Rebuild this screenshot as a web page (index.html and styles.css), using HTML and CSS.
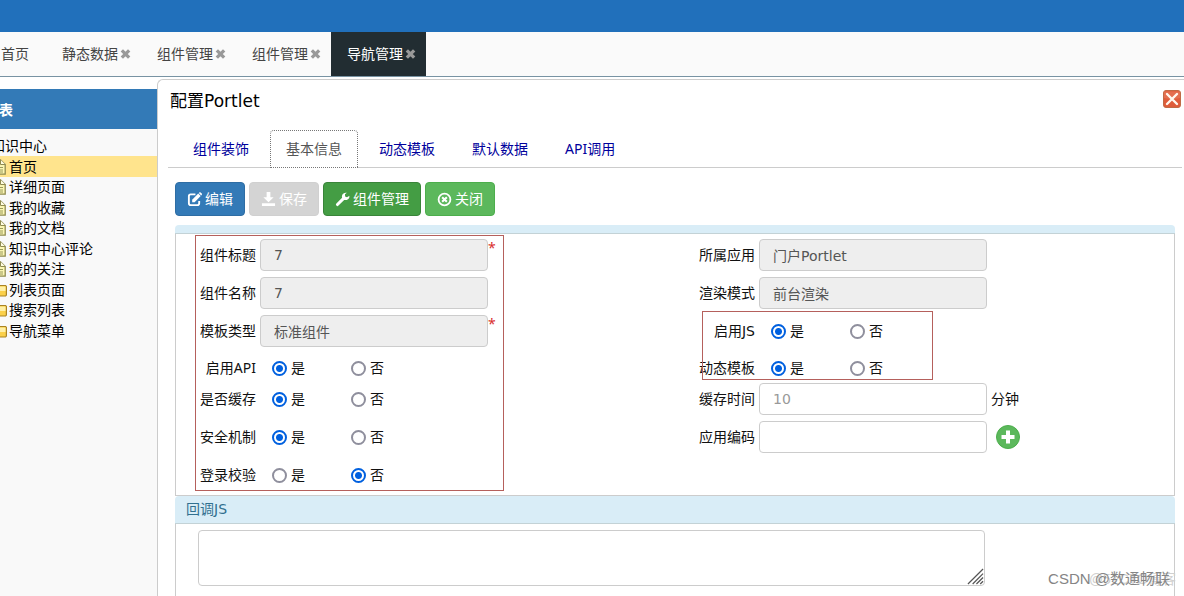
FILE: index.html
```html
<!DOCTYPE html>
<html lang="zh-CN">
<head>
<meta charset="utf-8">
<title>导航管理</title>
<link rel="stylesheet" href="styles.css">
</head>
<body>
<svg class="defs" aria-hidden="true">
  <symbol id="cross" viewBox="0 0 12 12"><path d="M2 2 10 10M10 2 2 10" stroke="currentColor" stroke-width="3.6" fill="none"/></symbol>
  <symbol id="page" viewBox="0 0 16 16"><path d="M2.5 .8H9.500L14.200 5.500V15.200H2.500Z" fill="#fbf6b4" stroke="#8f8a50" stroke-width="1.300"/><path d="M9.500 .8V5.500H14.200" fill="#fffde0" stroke="#8f8a50"/><path d="M5 6H8M5 8.500H12M5 11H12M5 13H12" stroke="#9a9a5c" fill="none"/></symbol>
  <symbol id="folder" viewBox="0 0 16 16"><path d="M.6 14V2H6L7.500 3.500H14.600L15.400 4.500V13L14.600 14Z" fill="#fbd049" stroke="#a98324" stroke-width="1.200"/><path d="M1.500 4.600H14.500V9H1.500Z" fill="#fff0a8"/></symbol>
</svg>
<div class="app">
  <header class="topbar"></header>
  <nav class="page-tabs">
    <div class="page-tab home"><a href="#">首页</a></div>
    <div class="page-tab"><a href="#">静态数据</a><button type="button" aria-label="关闭静态数据"><svg><use href="#cross"/></svg></button></div>
    <div class="page-tab"><a href="#">组件管理</a><button type="button" aria-label="关闭组件管理"><svg><use href="#cross"/></svg></button></div>
    <div class="page-tab"><a href="#">组件管理</a><button type="button" aria-label="关闭组件管理"><svg><use href="#cross"/></svg></button></div>
    <div class="page-tab active"><a href="#">导航管理</a><button type="button" aria-label="关闭导航管理"><svg><use href="#cross"/></svg></button></div>
  </nav>
  <div class="workspace">
    <aside class="sidebar">
      <h2>表</h2>
      <ul class="tree">
        <li class="root"><a href="#">知识中心</a></li>
        <li class="selected"><svg><use href="#page"/></svg><a href="#">首页</a></li>
        <li><svg><use href="#page"/></svg><a href="#">详细页面</a></li>
        <li><svg><use href="#page"/></svg><a href="#">我的收藏</a></li>
        <li><svg><use href="#page"/></svg><a href="#">我的文档</a></li>
        <li><svg><use href="#page"/></svg><a href="#">知识中心评论</a></li>
        <li><svg><use href="#page"/></svg><a href="#">我的关注</a></li>
        <li><svg><use href="#folder"/></svg><a href="#">列表页面</a></li>
        <li><svg><use href="#folder"/></svg><a href="#">搜索列表</a></li>
        <li><svg><use href="#folder"/></svg><a href="#">导航菜单</a></li>
      </ul>
    </aside>
    <main class="dialog">
      <div class="dialog-head">
        <h1>配置Portlet</h1>
        <button type="button" class="dialog-close" aria-label="关闭"><svg viewBox="0 0 18 18"><rect x=".5" y=".5" width="17" height="17" rx="2.500" fill="#df5c3a" stroke="#c06a45"/><path d="M1 1.500H17V8Q9 10 1 8Z" fill="#e87f60" opacity=".55"/><path d="M4 4 14 14M14 4 4 14" stroke="#fff8ee" stroke-width="2.400" stroke-linecap="round"/></svg></button>
      </div>
      <nav class="config-tabs">
        <a href="#">组件装饰</a>
        <a href="#" class="active">基本信息</a>
        <a href="#">动态模板</a>
        <a href="#">默认数据</a>
        <a href="#">API调用</a>
      </nav>
      <div class="toolbar">
        <button type="button" class="btn primary"><svg viewBox="0 0 16 16"><path d="M9 2.500H4Q2 2.500 2 4.500V12Q2 14 4 14H11Q13 14 13 12V9.500" fill="none" stroke="currentColor" stroke-width="2"/><path d="M5.500 8.200 12 1.700 14.600 4.300 8.100 10.800H5.500Z" fill="currentColor"/><path d="M12.600 1.100 13.400.3Q14 0 14.600.5L15.700 1.600Q16.200 2.200 15.800 2.900L15.100 3.700Z" fill="currentColor"/></svg>编辑</button>
        <button type="button" class="btn muted" disabled><svg viewBox="0 0 16 16"><path d="M6 0H10V5.500H13.500L8 11 2.500 5.500H6Z" fill="currentColor"/><path d="M1 12H15V15H1Z" fill="currentColor"/></svg>保存</button>
        <button type="button" class="btn manage"><svg viewBox="0 0 16 16"><path d="M2.600 13.400 9.200 6.800" stroke="currentColor" stroke-width="3.200" stroke-linecap="round"/><path d="M12.600.8Q9.500.2 7.900 2.600 6.900 4.400 7.600 6.400L9.700 8.500Q12 9 13.900 7.700 15.700 6.300 15.400 3.900L12.800 5.500 10.800 4.900 10.600 2.500Z" fill="currentColor"/></svg>组件管理</button>
        <button type="button" class="btn success"><svg viewBox="0 0 16 16"><circle cx="8" cy="8" r="6.300" fill="none" stroke="currentColor" stroke-width="1.900"/><path d="M5.500 5.500 10.500 10.500M10.500 5.500 5.500 10.500" stroke="currentColor" stroke-width="2.200"/></svg>关闭</button>
      </div>
      <form class="form">
        <section class="panel">
          <div class="panel-head slim"></div>
          <div class="panel-body fields">
            <div class="column">
              <div class="row"><label for="title">组件标题</label><input class="text" id="title" value="7" readonly><span class="star">*</span></div>
              <div class="row"><label for="name">组件名称</label><input class="text" id="name" value="7" readonly></div>
              <div class="row"><label for="type">模板类型</label><input class="text" id="type" value="标准组件" readonly><span class="star">*</span></div>
              <div class="row tight" role="radiogroup" aria-labelledby="l-api"><span class="caption" id="l-api">启用API</span><label class="option"><input type="radio" name="api" checked>是</label><label class="option"><input type="radio" name="api">否</label></div>
              <div class="row" role="radiogroup" aria-labelledby="l-cache"><span class="caption" id="l-cache">是否缓存</span><label class="option"><input type="radio" name="cache" checked>是</label><label class="option"><input type="radio" name="cache">否</label></div>
              <div class="row" role="radiogroup" aria-labelledby="l-safe"><span class="caption" id="l-safe">安全机制</span><label class="option"><input type="radio" name="safe" checked>是</label><label class="option"><input type="radio" name="safe">否</label></div>
              <div class="row" role="radiogroup" aria-labelledby="l-login"><span class="caption" id="l-login">登录校验</span><label class="option"><input type="radio" name="login">是</label><label class="option"><input type="radio" name="login" checked>否</label></div>
              <div class="mark mark-basic"></div>
            </div>
            <div class="column">
              <div class="row"><label for="app">所属应用</label><input class="text" id="app" value="门户Portlet" readonly></div>
              <div class="row"><label for="mode">渲染模式</label><input class="text" id="mode" value="前台渲染" readonly></div>
              <div class="row" role="radiogroup" aria-labelledby="l-js"><span class="caption wide" id="l-js">启用JS</span><label class="option"><input type="radio" name="js" checked>是</label><label class="option"><input type="radio" name="js">否</label></div>
              <div class="row tight" role="radiogroup" aria-labelledby="l-tpl"><span class="caption" id="l-tpl">动态模板</span><label class="option"><input type="radio" name="tpl" checked>是</label><label class="option"><input type="radio" name="tpl">否</label></div>
              <div class="row"><label for="ttl">缓存时间</label><input class="text" id="ttl" placeholder="10"><span class="unit">分钟</span></div>
              <div class="row"><label for="code">应用编码</label><input class="text" id="code"><button type="button" class="add" aria-label="添加"><svg viewBox="0 0 24 24"><circle cx="12" cy="12" r="11.500" fill="#5cb85c" stroke="#4cae4c"/><path d="M12 5.500V18.500M5.500 12H18.500" stroke="#fff" stroke-width="4"/></svg></button></div>
              <div class="mark mark-script"></div>
            </div>
          </div>
        </section>
        <section class="panel">
          <label class="panel-head" for="callback">回调JS</label>
          <div class="panel-body script-body">
            <div class="script-box">
              <textarea id="callback"></textarea>
              <svg class="grip" viewBox="0 0 18 18"><path d="M1 17 17 1M6 17 17 6M10 17 17 10M14 17 17 14" stroke="#555" stroke-width="1.300"/></svg>
            </div>
          </div>
        </section>
      </form>
    </main>
  </div>
  <div class="watermark back">@51CTO博客</div>
  <div class="watermark">CSDN @数通畅联</div>
</div>
</body>
</html>
```

FILE: styles.css
```css
* { box-sizing: border-box; }
body {
  margin: 0;
  font: 14px/20px "Noto Sans", "Noto Sans CJK SC", sans-serif;
  color: #111;
  background: #fff;
}
button, input, textarea { font: inherit; color: inherit; }
button { padding: 0; border: 0; background: none; }
a { color: inherit; text-decoration: none; }
.defs { display: none; }
.app {
  position: relative;
  display: flex;
  flex-direction: column;
  height: 100vh;
  overflow: hidden;
}
.topbar { flex: none; height: 32px; background: #2170bb; }

.page-tabs {
  flex: none;
  display: flex;
  height: 45px;
  background: #fafafa;
  border-bottom: 1px solid #7893a3;
  color: #444;
}
.page-tab {
  display: flex;
  align-items: center;
  gap: 2px;
  padding: 0 10px 0 16px;
}
.page-tab.home { margin-left: -15px; padding-right: 17px; }
.page-tab.active { background: #222d32; color: #fff; }
.page-tab button { display: flex; color: #999; }
.page-tab svg { width: 11px; height: 12px; }

.workspace { flex: 1; min-height: 0; display: flex; padding-top: 2px; }
.sidebar {
  flex: none;
  width: 157px;
  margin-top: 10px;
  overflow: hidden;
  background: #f9f9f9;
}
.sidebar h2 {
  margin: 0;
  height: 40px;
  background: #337ab7;
  color: #fff;
  font-size: 14px;
  line-height: 42px;
  text-indent: -1px;
}
.tree {
  display: grid;
  grid-auto-rows: 20px 21px;
  margin: 0;
  padding: 7px 0 0;
  list-style: none;
  color: #000;
}
.tree li { display: flex; align-items: center; gap: 2px; margin-left: -9px; white-space: nowrap; }
.tree .selected { background: #ffe48d; }
.tree svg { width: 16px; height: 16px; }

.dialog {
  flex: 1;
  min-width: 0;
  overflow: hidden;
  border: 1px solid #ccc;
  border-width: 1px 0 0 1px;
  border-top-left-radius: 6px;
  background: #fff;
}
.dialog-head {
  display: flex;
  justify-content: space-between;
  align-items: flex-start;
  height: 50px;
  padding: 10px 3px 0 12px;
}
.dialog-head h1 {
  margin: 0;
  color: #000;
  font: 400 17px/22px "DejaVu Sans", "Noto Sans CJK SC", sans-serif;
}
.dialog-close svg { display: block; width: 18px; height: 18px; }
.config-tabs {
  display: flex;
  gap: 5px;
  height: 38px;
  margin: 0 2px 0 10px;
  padding-left: 9px;
  border-bottom: 1px solid #ccc;
  color: #00009c;
}
.config-tabs a {
  height: 38px;
  padding: 0 15px;
  border: 1px solid transparent;
  line-height: 36px;
}
.config-tabs .active {
  border: 1px dotted #777;
  border-radius: 4px 4px 0 0;
  background: #fff;
  color: #555;
}
.toolbar { display: flex; gap: 4px; padding: 14px 17px 9px; }
.btn {
  display: flex;
  align-items: center;
  gap: 3px;
  height: 34px;
  padding: 0 11px;
  border: 1px solid;
  border-radius: 4px;
  color: #fff;
}
.btn svg { width: 15px; height: 15px; }
.btn.primary { background: #337ab7; border-color: #2e6da4; }
.btn.muted { background: #d4d4d4; border-color: #d0d0d0; }
.btn.manage { background: #449d44; border-color: #398439; }
.btn.success { background: #5cb85c; border-color: #4cae4c; }

.form { margin: 0 9px 0 17px; }
.panel-head {
  display: block;
  height: 28px;
  padding-left: 11px;
  border-bottom: 1px solid #c3d2d6;
  border-radius: 4px 4px 0 0;
  background: #d9edf7;
  color: #31708f;
  font-family: "DejaVu Sans", "Noto Sans CJK SC", sans-serif;
  line-height: 27px;
}
.panel-head.slim { height: 9px; }
.panel-body { border: 1px solid #ccc; border-top: 0; }
.fields { display: grid; grid-template-columns: 1fr 1fr; }
.column { position: relative; padding: 5px 0 4px; }
.row { display: flex; align-items: center; height: 32px; }
.row + .row { margin-top: 6px; }
.row.tight { height: 30px; }
.row.tight + .row { margin-top: 0; }
.row > label:first-child, .caption {
  width: 80px;
  text-align: right;
  white-space: nowrap;
}
.caption.wide { font-family: "DejaVu Sans", "Noto Sans CJK SC", sans-serif; }
.text {
  width: 228px;
  height: 32px;
  margin-left: 4px;
  padding: 0 13px;
  border: 1px solid #ccc;
  border-radius: 4px;
  background: #fff;
  color: #555;
  font-family: "DejaVu Sans", "Noto Sans CJK SC", sans-serif;
}
.text:read-only { background: #eee; }
.text::placeholder { color: #999; opacity: 1; }
.star { align-self: flex-start; line-height: 18px; color: #d9302c; }
.unit { margin-left: 4px; }
.add { margin-left: 9px; }
.add svg { display: block; width: 24px; height: 24px; }
.option { display: flex; align-items: center; gap: 4px; width: 79px; }
.caption + .option { margin-left: 16px; }
.option input {
  appearance: none;
  flex: none;
  width: 15px;
  height: 15px;
  margin: 0;
  border: 2px solid #8f8f9d;
  border-radius: 50%;
  background: #fff;
}
.option input:checked {
  border-color: #0060df;
  background: radial-gradient(circle, #0060df 0 3px, #fff 4px);
}
.mark { position: absolute; border: 1px solid #b5605c; pointer-events: none; }
.mark-basic { left: 19px; top: 1px; width: 309px; height: 256px; }
.mark-script { left: 27px; top: 77px; width: 231px; height: 69px; }

.script-body { padding: 6px 22px 20px; }
.script-box { position: relative; width: 82.5%; }
.script-box textarea {
  display: block;
  width: 100%;
  height: 56px;
  padding: 6px 12px;
  border: 1px solid #ccc;
  border-radius: 4px;
  resize: none;
}
.grip { position: absolute; right: 1px; bottom: 1px; width: 17px; height: 17px; }

.watermark {
  position: absolute;
  right: 14px;
  bottom: 7px;
  color: #858585;
  font: 15px/20px "Liberation Sans", "Noto Sans CJK SC", sans-serif;
  pointer-events: none;
}
.watermark.back { right: 8px; color: #d0d0d0; font-size: 14px; }
```
